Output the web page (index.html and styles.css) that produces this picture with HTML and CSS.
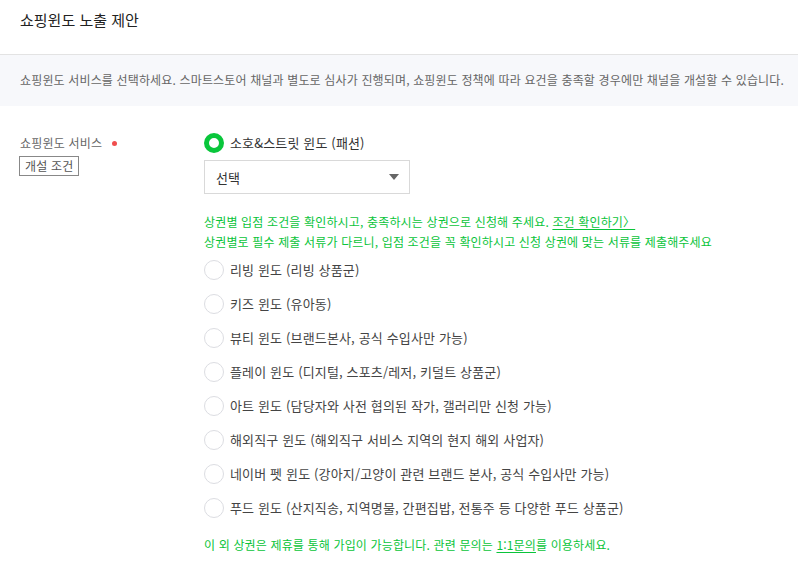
FILE: index.html
```html
<!DOCTYPE html>
<html lang="ko">
<head>
<meta charset="utf-8">
<link rel="stylesheet" href="styles.css">
</head>
<body>
<div class="page">
  <header class="head">
    <h1 class="title">쇼핑윈도 노출 제안</h1>
  </header>
  <div class="notice">쇼핑윈도 서비스를 선택하세요. 스마트스토어 채널과 별도로 심사가 진행되며, 쇼핑윈도 정책에 따라 요건을 충족할 경우에만 채널을 개설할 수 있습니다.</div>
  <div class="form">
    <div class="label-col">
      <div class="label">쇼핑윈도 서비스<span class="req"></span></div>
      <span class="cond">개설 조건</span>
    </div>
    <div class="field-col">
      <div class="radio sel"><span class="dot"></span><span class="rtext">소호&amp;스트릿 윈도 (패션)</span></div>
      <div class="select"><span>선택</span><span class="caret"></span></div>
      <p class="green g1">상권별 입점 조건을 확인하시고, 충족하시는 상권으로 신청해 주세요. <u>조건 확인하기〉</u></p>
      <p class="green g2">상권별로 필수 제출 서류가 다르니, 입점 조건을 꼭 확인하시고 신청 상권에 맞는 서류를 제출해주세요</p>
      <div class="list">
        <div class="radio"><span class="dot"></span><span class="rtext">리빙 윈도 (리빙 상품군)</span></div>
        <div class="radio"><span class="dot"></span><span class="rtext">키즈 윈도 (유아동)</span></div>
        <div class="radio"><span class="dot"></span><span class="rtext">뷰티 윈도 (브랜드본사, 공식 수입사만 가능)</span></div>
        <div class="radio"><span class="dot"></span><span class="rtext">플레이 윈도 (디지털, 스포츠/레저, 키덜트 상품군)</span></div>
        <div class="radio"><span class="dot"></span><span class="rtext">아트 윈도 (담당자와 사전 협의된 작가, 갤러리만 신청 가능)</span></div>
        <div class="radio"><span class="dot"></span><span class="rtext">해외직구 윈도 (해외직구 서비스 지역의 현지 해외 사업자)</span></div>
        <div class="radio"><span class="dot"></span><span class="rtext">네이버 펫 윈도 (강아지/고양이 관련 브랜드 본사, 공식 수입사만 가능)</span></div>
        <div class="radio"><span class="dot"></span><span class="rtext">푸드 윈도 (산지직송, 지역명물, 간편집밥, 전통주 등 다양한 푸드 상품군)</span></div>
      </div>
      <p class="green g3">이 외 상권은 제휴를 통해 가입이 가능합니다. 관련 문의는 <u>1:1문의</u>를 이용하세요.</p>
    </div>
  </div>
</div>
</body>
</html>
```
FILE: styles.css
```css
* { box-sizing: border-box; }
html, body { margin: 0; padding: 0; background: #fff; }
body {
  font-family: "Noto Sans CJK KR", "Noto Sans", sans-serif;
  color: #333;
  width: 798px;
  height: 561px;
  overflow: hidden;
}
.head {
  height: 55px;
  border-bottom: 1px solid #e3e3e3;
  padding: 9px 20px 0;
}
.title {
  margin: 0;
  font-size: 15px;
  font-weight: 400;
  color: #222;
  line-height: 22px;
  letter-spacing: 0;
}
.notice {
  background: #f7f8fb;
  height: 51px;
  padding: 15px 20px 0;
  font-size: 12px;
  color: #666;
  line-height: 20px;
  letter-spacing: 0.15px;
  white-space: nowrap;
}
.form {
  display: flex;
  padding: 27px 0 0 20px;
}
.label-col {
  width: 184px;
  flex: none;
}
.label {
  font-size: 12px;
  color: #666;
  line-height: 18px;
  display: flex;
  align-items: center;
  margin-top: 1px;
  letter-spacing: 0.2px;
}
.req {
  width: 5px;
  height: 5px;
  border-radius: 50%;
  background: #f04e4e;
  margin-left: 10px;
  margin-top: 1px;
}
.cond {
  display: inline-block;
  margin-top: 1px;
  margin-left: -1px;
  border: 1px solid #888;
  font-size: 12px;
  color: #555;
  line-height: 18px;
  padding: 0 4px 0 5px;
  letter-spacing: 0.2px;
}
.field-col {
  flex: 1;
  display: flex;
  flex-direction: column;
  align-items: flex-start;
}
.radio {
  display: flex;
  align-items: center;
  height: 20px;
}
.dot {
  width: 20px;
  height: 20px;
  border-radius: 50%;
  border: 1px solid #dcdde2;
  background: #fff;
  flex: none;
}
.radio.sel .dot {
  border: 5px solid #09c63b;
}
.rtext {
  margin-left: 6px;
  font-size: 13px;
  color: #444;
  line-height: 20px;
  letter-spacing: 0.15px;
  white-space: nowrap;
}
.radio.sel .rtext { color: #333; }
.select {
  margin-top: 7px;
  width: 206px;
  height: 34px;
  border: 1px solid #d9d9d9;
  display: flex;
  align-items: center;
  justify-content: space-between;
  padding: 0 10px 0 11px;
  font-size: 13px;
  color: #333;
}
.caret {
  width: 0;
  height: 0;
  border-left: 5px solid transparent;
  border-right: 5px solid transparent;
  border-top: 6px solid #666;
}
.green {
  margin: 0;
  font-size: 12px;
  color: #0ac43a;
  line-height: 20px;
  letter-spacing: 0.15px;
  white-space: nowrap;
}
.green u { text-underline-offset: 2px; }
.g1 { margin-top: 18px; }
.list {
  margin-top: 8px;
  display: flex;
  flex-direction: column;
  gap: 14px;
}
.g3 { margin-top: 17px; }
```
